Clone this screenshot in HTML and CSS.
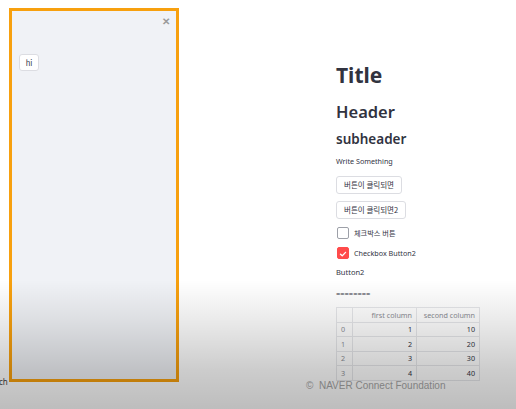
FILE: index.html
```html
<!DOCTYPE html>
<html>
<head>
<meta charset="utf-8">
<link rel="stylesheet" href="styles.css">
</head>
<body>
<div class="page">
  <aside class="sidebar">
    <div class="close">✕</div>
    <button class="btn hi">hi</button>
  </aside>
  <main class="main">
    <h1 class="title">Title</h1>
    <h2 class="header">Header</h2>
    <h3 class="subheader">subheader</h3>
    <p class="text t1">Write Something</p>
    <button class="btn b1">버튼이 클릭되면</button>
    <button class="btn b2">버튼이 클릭되면2</button>
    <label class="check"><span class="box"></span><span>체크박스 버튼</span></label>
    <label class="check"><span class="box on"><svg viewBox="0 0 12 12" width="12" height="12"><path d="M3 6.2 L5.1 8.2 L9 4" fill="none" stroke="#fff" stroke-width="1.6" stroke-linecap="round" stroke-linejoin="round"/></svg></span><span>Checkbox Button2</span></label>
    <p class="text t2">Button2</p>
    <p class="text t3">========</p>
    <table class="df">
      <colgroup><col class="c0"><col class="c1"><col class="c2"></colgroup>
      <thead><tr><th class="idx"></th><th>first column</th><th>second column</th></tr></thead>
      <tbody>
        <tr><td class="idx">0</td><td>1</td><td>10</td></tr>
        <tr><td class="idx">1</td><td>2</td><td>20</td></tr>
        <tr><td class="idx">2</td><td>3</td><td>30</td></tr>
        <tr><td class="idx">3</td><td>4</td><td>40</td></tr>
      </tbody>
    </table>
  </main>
</div>
<div class="ch">ch</div>
<div class="footer">©&nbsp;&nbsp;NAVER Connect Foundation</div>
<div class="shade"></div>
</body>
</html>
```
FILE: styles.css
```css
html, body {
  margin: 0;
  padding: 0;
  background: #ffffff;
  width: 516px;
  height: 409px;
  overflow: hidden;
  font-family: "Noto Sans", "Noto Sans CJK KR", sans-serif;
  color: #31333f;
}
.page {
  display: flex;
  padding: 8px 0 0 9px;
}
.sidebar {
  position: relative;
  box-sizing: border-box;
  width: 170px;
  height: 374px;
  border: 3px solid #f7a00e;
  background: #f0f2f6;
  flex-shrink: 0;
}
.close {
  position: absolute;
  right: 6px;
  top: 3px;
  font-size: 10px;
  color: #9a9a9a;
  font-weight: bold;
}
.btn {
  display: block;
  background: #fff;
  border: 1px solid #dcdde2;
  border-radius: 3px;
  font-family: "Noto Sans CJK KR", "Noto Sans", sans-serif;
  font-size: 7.5px;
  color: #31333f;
  padding: 0 7px;
  height: 18px;
  line-height: 16px;
  white-space: nowrap;
}
.hi {
  margin: 43px 0 0 7px;
  width: 20px;
  height: 17px;
  padding: 0;
  text-align: center;
}
.main {
  margin-left: 157px;
  display: flex;
  flex-direction: column;
  align-items: flex-start;
}
.title {
  margin: 54px 0 0 0;
  font-size: 21px;
  font-weight: 700;
  line-height: 26px;
}
.header {
  margin: 14px 0 0 0;
  font-size: 16.5px;
  font-weight: 600;
  line-height: 20px;
}
.subheader {
  margin: 8px 0 0 0;
  font-size: 13.5px;
  font-weight: 600;
  line-height: 18px;
}
.text {
  margin: 5px 0 0 0;
  font-size: 7.5px;
  line-height: 11px;
}
.t1 { margin-top: 8px; font-size: 7.2px; }
.b1 { margin-top: 9px; }
.b2 { margin-top: 7px; }
.check {
  display: flex;
  align-items: center;
  gap: 5px;
  font-size: 7.2px;
  font-family: "Noto Sans", "Noto Sans CJK KR", sans-serif;
  margin-top: 8px;
  margin-left: 1px;
  height: 12px;
}
.check + .check { margin-top: 8px; }
.box {
  box-sizing: border-box;
  width: 12px;
  height: 12px;
  border: 1px solid #9da0a8;
  border-radius: 2px;
  background: #fff;
  display: flex;
}
.box.on {
  background: #ff4b4b;
  border-color: #ff4b4b;
}
.t2 { margin-top: 8px; }
.t3 { margin-top: 10px; font-size: 7.5px; letter-spacing: 0; }
.df {
  margin-top: 8px;
  border-collapse: collapse;
  table-layout: fixed;
  width: 143px;
  font-size: 7.2px;
  color: #31333f;
}
.c0 { width: 16px; }
.c1 { width: 64px; }
.c2 { width: 63px; }
.df th, .df td {
  border: 1px solid #e6e7ea;
  height: 13.5px;
  padding: 0 4px;
  text-align: right;
  font-weight: 400;
  white-space: nowrap;
}
.df th { color: #8a8c94; }
.df .idx { text-align: left; color: #8a8c94; }
.ch {
  position: absolute;
  left: -1px;
  top: 376px;
  font-size: 8px;
  color: #444;
}
.footer {
  position: absolute;
  left: 306px;
  top: 380px;
  font-family: "Liberation Sans", Arial, sans-serif;
  font-size: 10px;
  color: #a6a6a6;
}
.shade {
  position: absolute;
  left: 0;
  top: 280px;
  width: 516px;
  height: 129px;
  background: linear-gradient(to bottom, rgba(0,0,0,0) 0%, rgba(0,0,0,0.08) 30%, rgba(0,0,0,0.2) 70%, rgba(0,0,0,0.26) 100%);
  pointer-events: none;
}
```
